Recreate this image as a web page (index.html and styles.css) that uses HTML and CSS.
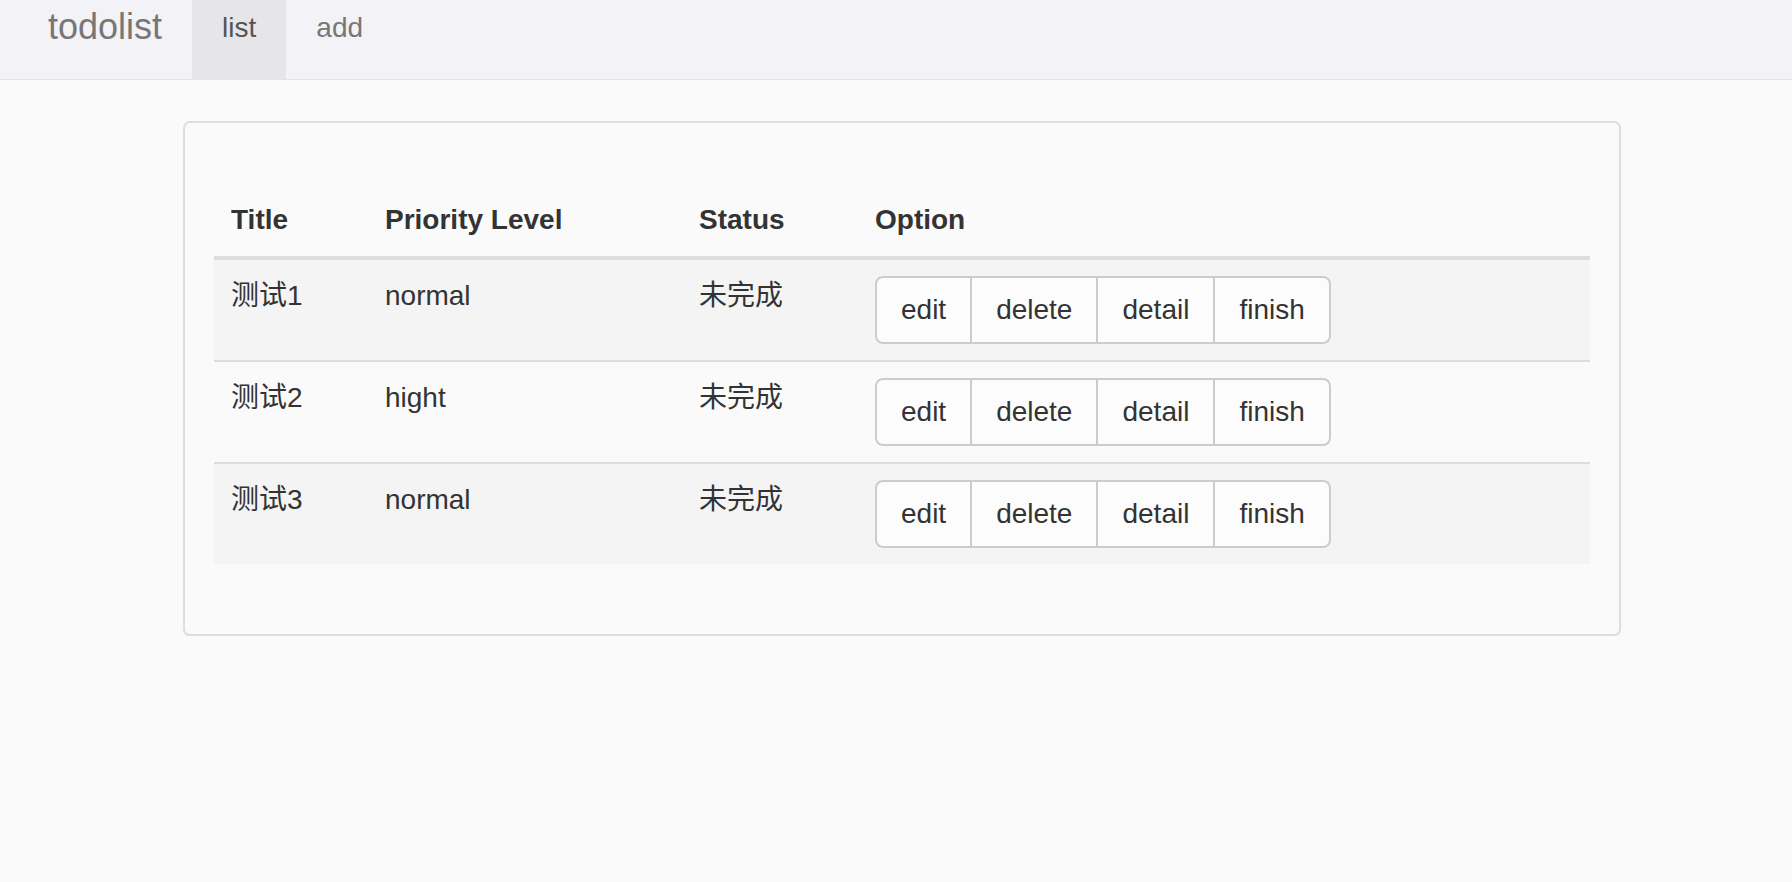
FILE: index.html
```html
<!DOCTYPE html>
<html lang="zh">
<head>
<meta charset="utf-8">
<title>todolist</title>
<link rel="stylesheet" href="styles.css">
</head>
<body>
<nav class="navbar">
  <a class="brand" href="#">todolist</a>
  <ul class="nav">
    <li class="nav-item active"><a href="#">list</a></li>
    <li class="nav-item"><a href="#">add</a></li>
  </ul>
</nav>
<main class="page">
  <section class="card">
    <table class="table">
      <colgroup>
        <col class="c-title">
        <col class="c-level">
        <col class="c-status">
        <col class="c-option">
      </colgroup>
      <thead>
        <tr><th>Title</th><th>Priority Level</th><th>Status</th><th>Option</th></tr>
      </thead>
      <tbody>
        <tr class="odd">
          <td>测试1</td><td>normal</td><td>未完成</td>
          <td><div class="btn-group"><button class="btn">edit</button><button class="btn">delete</button><button class="btn">detail</button><button class="btn">finish</button></div></td>
        </tr>
        <tr>
          <td>测试2</td><td>hight</td><td>未完成</td>
          <td><div class="btn-group"><button class="btn">edit</button><button class="btn">delete</button><button class="btn">detail</button><button class="btn">finish</button></div></td>
        </tr>
        <tr class="odd">
          <td>测试3</td><td>normal</td><td>未完成</td>
          <td><div class="btn-group"><button class="btn">edit</button><button class="btn">delete</button><button class="btn">detail</button><button class="btn">finish</button></div></td>
        </tr>
      </tbody>
    </table>
  </section>
</main>
</body>
</html>
```
FILE: styles.css
```css
* { box-sizing: border-box; }
html, body {
  margin: 0;
  padding: 0;
  background: #fafafa;
  font-family: "Liberation Sans", Arial, "Noto Sans CJK SC", sans-serif;
  color: #333;
  font-size: 28px;
  line-height: 40px;
}
.navbar {
  height: 80px;
  background: #f3f2f6;
  border-bottom: 1px solid #e4e4e4;
  display: flex;
  align-items: stretch;
  padding-left: 18px;
}
.brand {
  display: block;
  padding: 7px 30px 0;
  font-size: 36px;
  line-height: 40px;
  color: #777;
  text-decoration: none;
}
.nav {
  list-style: none;
  margin: 0;
  padding: 0;
  display: flex;
}
.nav-item a {
  display: block;
  height: 79px;
  padding: 8px 30px 0;
  font-size: 28px;
  line-height: 40px;
  color: #777;
  text-decoration: none;
}
.nav-item.active a {
  background: #e6e5e8;
  color: #555;
}
.page {
  padding: 41px 0 0 183px;
}
.card {
  width: 1438px;
  height: 515px;
  border: 2px solid #dedede;
  border-radius: 7px;
  background: #fafafa;
  padding: 61px 30px 0 29px;
  box-shadow: 0 1px 2px rgba(0,0,0,0.05);
}
.table {
  width: 1376px;
  border-collapse: collapse;
  table-layout: fixed;
}
.c-title { width: 154px; }
.c-level { width: 314px; }
.c-status { width: 176px; }
.table th, .table td {
  text-align: left;
  vertical-align: top;
  padding: 16px 17px;
  line-height: 40px;
}
.table th {
  font-weight: bold;
  border-bottom: 4px solid #dddddd;
}
.table tbody tr + tr td {
  border-top: 2px solid #dddddd;
}
.table tr.odd td {
  background: #f4f4f4;
}
.btn-group {
  display: inline-flex;
}
.btn {
  font-family: "Liberation Sans", Arial, sans-serif;
  font-size: 28px;
  line-height: 40px;
  color: #333;
  background: #fcfcfc;
  border: 2px solid #cccccc;
  padding: 12px 24px;
  margin: 0;
  border-radius: 0;
}
.btn + .btn { margin-left: -2px; }
.btn:first-child { border-radius: 8px 0 0 8px; }
.btn:last-child { border-radius: 0 8px 8px 0; }
```
